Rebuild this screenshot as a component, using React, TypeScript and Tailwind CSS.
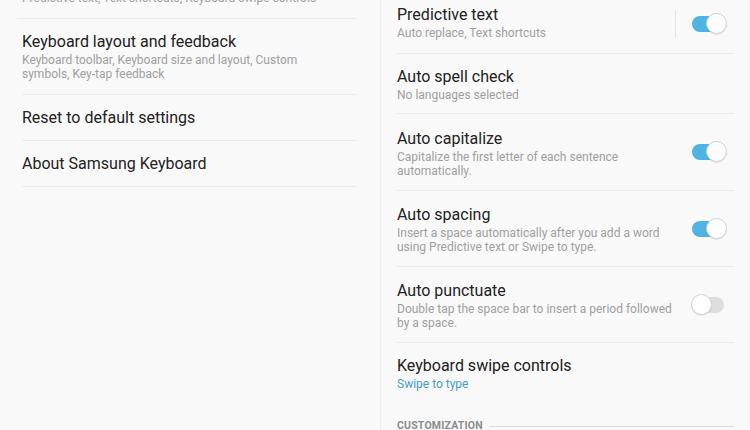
import React from 'react';

type Row = {
  title: string;
  sub?: string;
  h: number;
  pt?: number;
  toggle?: boolean;
  on?: boolean;
  link?: boolean;
  sep?: boolean;
};

const leftRows: Row[] = [
  { title: 'Keyboard layout and feedback', sub: 'Keyboard toolbar, Keyboard size and layout, Custom symbols, Key-tap feedback', h: 76, pt: 13 },
  { title: 'Reset to default settings', h: 46 },
  { title: 'About Samsung Keyboard', h: 46 },
];

const rightRows: Row[] = [
  { title: 'Predictive text', sub: 'Auto replace, Text shortcuts', h: 60, pt: 11, toggle: true, on: true, sep: true },
  { title: 'Auto spell check', sub: 'No languages selected', h: 60, pt: 13 },
  { title: 'Auto capitalize', sub: 'Capitalize the first letter of each sentence automatically.', h: 77, pt: 15, toggle: true, on: true },
  { title: 'Auto spacing', sub: 'Insert a space automatically after you add a word using Predictive text or Swipe to type.', h: 76, pt: 14, toggle: true, on: true },
  { title: 'Auto punctuate', sub: 'Double tap the space bar to insert a period followed by a space.', h: 76, pt: 14, toggle: true, on: false },
  { title: 'Keyboard swipe controls', sub: 'Swipe to type', h: 64, pt: 13, link: true },
];

function Toggle({ on }: { on?: boolean }) {
  return (
    <div className="relative w-[36px] h-[22px] flex items-center">
      <div className={`w-[32px] h-[16px] rounded-full ml-[1px] ${on ? 'bg-[#4fb4e2]' : 'bg-[#dedede]'}`} />
      <div
        className={`absolute top-0 ${on ? 'right-0' : 'left-0'} w-[21px] h-[21px] rounded-full bg-white border border-[#cfcfcf] shadow-[0_1px_1px_rgba(0,0,0,0.08)]`}
      />
    </div>
  );
}

function Item({ row, textW, last }: { row: Row; textW: string; last?: boolean }) {
  return (
    <div
      className={`relative flex ${row.pt === undefined ? 'items-center' : 'items-start'} ${last ? '' : 'border-b border-[#ebebeb]'}`}
      style={{ height: row.h, paddingTop: row.pt }}
    >
      <div className={`flex flex-col ${textW}`}>
        <div className="text-[16px] leading-[20px] text-[#222222]">{row.title}</div>
        {row.sub && (
          <div
            className={`mt-[1px] text-[12px] leading-[14px] ${row.link ? 'text-[#3f9fc6]' : 'text-[#a0a0a0]'}`}
          >
            {row.sub}
          </div>
        )}
      </div>
      {row.toggle && (
        <div className="absolute right-0 top-0 bottom-0 flex items-center">
          {row.sep && <div className="w-px h-[28px] bg-[#e6e6e6] mr-[15px]" />}
          <div className="mr-[7px]">
            <Toggle on={row.on} />
          </div>
        </div>
      )}
    </div>
  );
}

export default function App() {
  return (
    <div
      className="w-[750px] h-[430px] overflow-hidden bg-[#f9f9f9] flex"
      style={{ fontFamily: 'Roboto, "Noto Sans", sans-serif' }}
    >
      {/* left column */}
      <div className="w-[381px] border-r border-[#efefef] flex flex-col">
        <div className="ml-[17px] mr-[23px] pl-[5px] h-[19px] flex items-end pb-[13px] border-b border-[#ebebeb]">
          <div className="text-[12px] leading-[14px] text-[#a0a0a0] whitespace-nowrap">
            Predictive text, Text shortcuts, Keyboard swipe controls
          </div>
        </div>
        <div className="ml-[17px] mr-[23px] pl-[5px]">
          {leftRows.map((r) => (
            <Item key={r.title} row={r} textW="w-[300px]" />
          ))}
        </div>
      </div>

      {/* right column */}
      <div className="flex-1 flex flex-col">
        <div className="ml-[11px] mr-[16px] pl-[5px] -mt-[6px]">
          {rightRows.map((r, i) => (
            <Item key={r.title} row={r} textW="w-[280px]" last={i === rightRows.length - 1} />
          ))}
        </div>
        <div className="ml-[16px] mr-[16px] mt-[12px] flex items-center gap-[6px]">
          <span className="text-[10.5px] leading-[14px] font-bold tracking-[0.2px] text-[#8c8c8c]">CUSTOMIZATION</span>
          <div className="flex-1 h-px bg-[#dcdcdc]" />
        </div>
      </div>
    </div>
  );
}
